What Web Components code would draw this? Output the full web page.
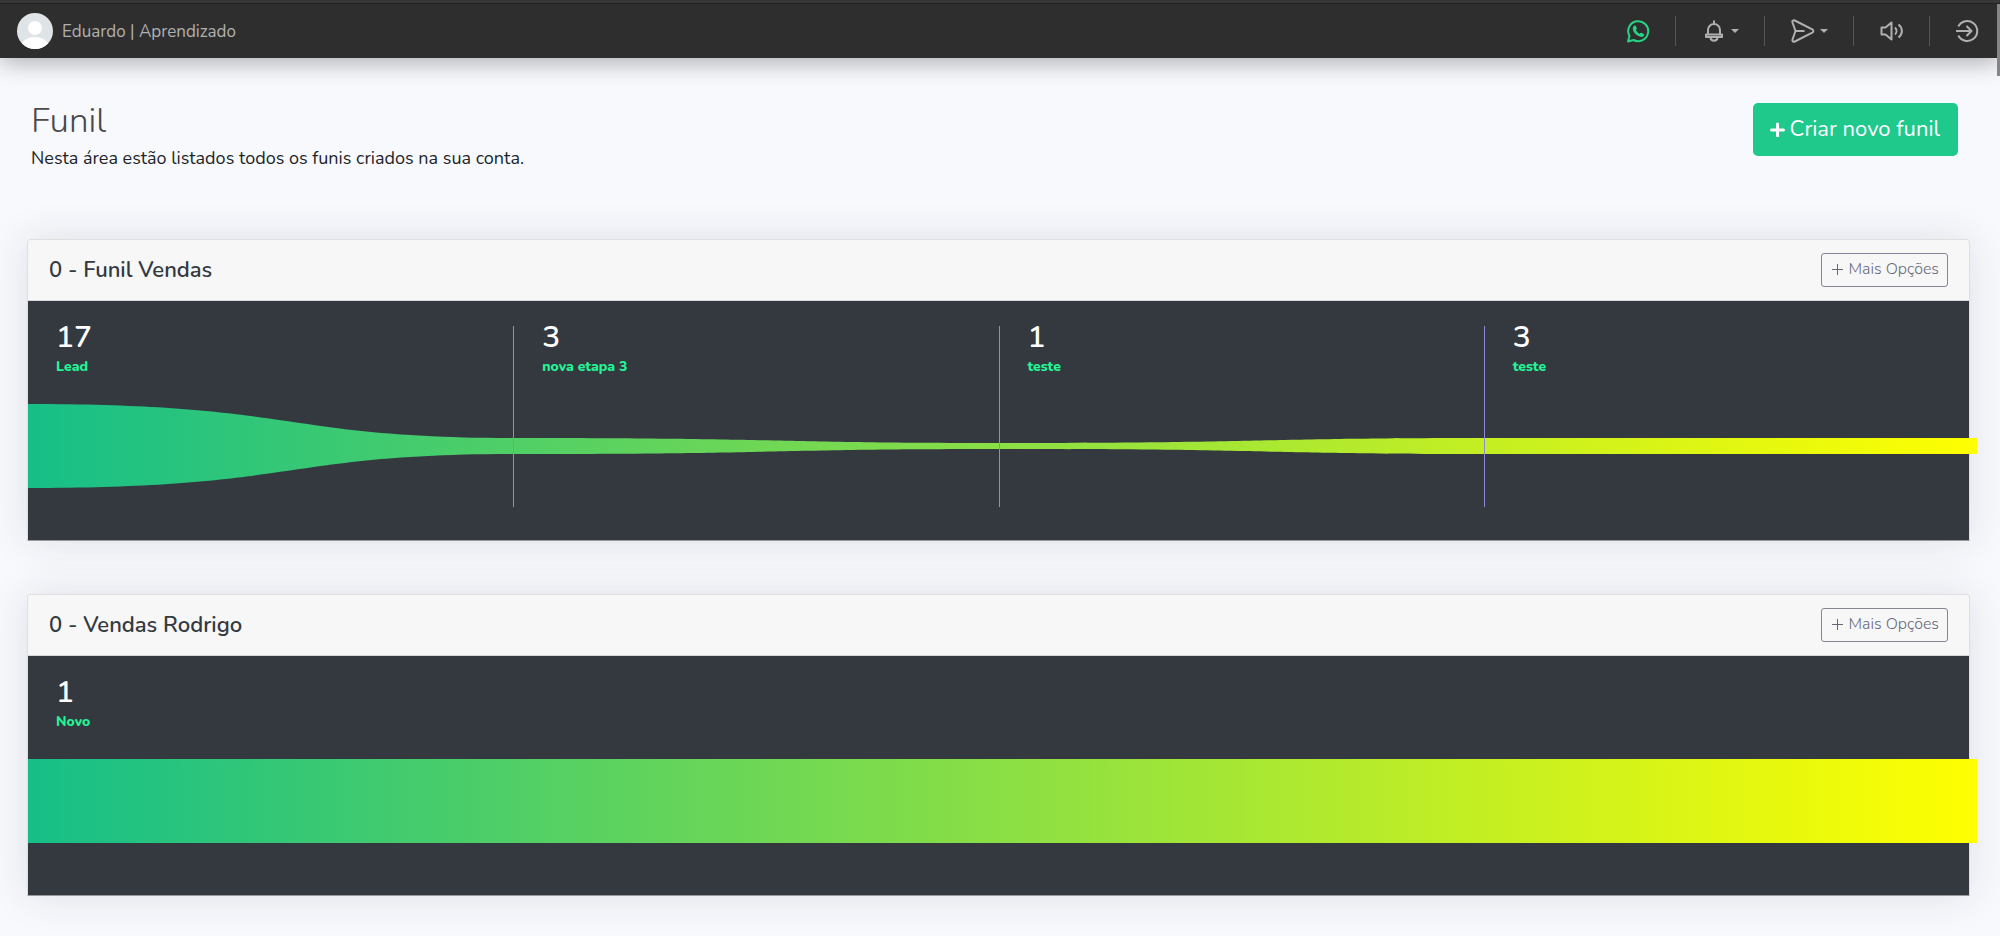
<!DOCTYPE html>
<html lang="pt-BR">
<head>
<meta charset="utf-8">
<title>Funil</title>
<style>
  body {
    margin: 0;
    background: #f8f9fd;
    color: #212529;
    font-family: Nunito, Lato, "Open Sans", sans-serif;
    font-size: 17px;
    overflow-x: hidden;
  }

  main {
    display: flex;
    flex-direction: column;
    gap: 53px;
    padding: 36px 30px 40px 27px;
  }
</style>
</head>
<body>
<app-navbar user="Eduardo | Aprendizado"></app-navbar>

<main>
  <page-header>
    <span slot="title">Funil</span>
    <span slot="text">Nesta área estão listados todos os funis criados na sua conta.</span>
    <span slot="action">Criar novo funil</span>
  </page-header>
  <funnel-card id="vendas">0 - Funil Vendas</funnel-card>
  <funnel-card id="rodrigo">0 - Vendas Rodrigo</funnel-card>
</main>

<script>
const ICONS = {
  whatsapp: `
    <path d="M2 22.5l1.5-5.4A10 10 0 1 1 7.500 21z"/>
    <path fill="currentColor" stroke="none" d="M7.7 6.9c.5-.6 1.7-.7 2-.1l1.1 2.4c.2.4-.1 1-.9 1.7.9 1.9 2.2 3.1 3.9 3.9.6-.9 1.1-1.2 1.6-1l2.4 1.2c.5.3.4 1.3-.1 1.9-1.2 1.4-3.2 1.3-5.7-.1-2.4-1.3-4.1-3.3-4.9-5.6-.5-1.7-.3-3.2.6-4.3z"/>`,
  bell: `
    <path d="M5.5 16c.8-1.3.5-3 .5-5a6 6 0 0 1 12 0c0 2-.3 3.7.5 5"/>
    <path d="M12 4.5v-3M4 15.5h16V18H4zM8.5 19c.5 3.5 6.5 3.5 7 0"/>`,
  send: `
    <path d="M1.5 3.5C1 1.8 2.4.9 3.8 1.5l17.5 8.9c1.4.8 1.4 2.4 0 3.2L3.8 22.5c-1.4.6-2.8-.3-2.3-2l3-8.5z"/>
    <path d="M4.5 12h9"/>`,
  volume: `
    <path d="M1.5 8.5h4l6-5v17l-6-5h-4z"/>
    <path d="M15 8.5c2 2 2 5 0 7M18.5 5.5c4.5 3.5 4.5 9.5 0 13"/>`,
  logout: `
    <path d="M3.3 7.5a10 10 0 1 1 0 9"/>
    <path d="M1 12h15M11.5 7l5 5-5 5"/>`
};

function icon(name) {
  return `<svg class="icon" viewBox="0 0 24 24" fill="none" stroke="currentColor" aria-hidden="true">${ICONS[name]}</svg>`;
}

class AppNavbar extends HTMLElement {
  constructor() {
    super();
    this.attachShadow({ mode: "open" });
  }

  connectedCallback() {
    this.render();
  }

  render() {
    this.shadowRoot.innerHTML = `
    <style>
      :host {
        display: block;
        position: relative;
        background: #2e2e2e;
        border-top: 3px solid #373737;
        color: #b0b0b0;
        box-shadow: 0 4px 24px rgba(0, 0, 0, 0.32);
      }

      nav {
        display: flex;
        align-items: center;
        justify-content: space-between;
        height: 54px;
        border-top: 1px solid #222;
        padding: 0 21px 0 17px;
      }

      .user {
        display: flex;
        align-items: center;
        gap: 9px;
        color: inherit;
        text-decoration: none;
      }

      .avatar {
        width: 36px;
        height: 36px;
      }

      .actions {
        display: flex;
        align-items: center;
      }

      button {
        display: flex;
        align-items: center;
        gap: 5px;
        height: 30px;
        padding: 0 25px 0 26px;
        border: 0;
        border-left: 1px solid #555;
        background: none;
        color: inherit;
        cursor: pointer;
      }

      button:first-child {
        border-left: 0;
        color: #25d383;
      }

      button:last-child {
        padding: 0 0 0 25px;
      }

      .icon {
        width: 24px;
        height: 24px;
        stroke-width: 2;
        stroke-linejoin: round;
      }

      .caret {
        border: 4px solid transparent;
        border-top-color: currentColor;
        border-bottom: 0;
      }

      .thumb {
        position: absolute;
        top: 1px;
        right: 0;
        width: 3px;
        height: 72px;
        background: #858585;
      }
    </style>

    <nav>
      <a class="user" href="#">
        <svg class="avatar" viewBox="0 0 36 36" aria-hidden="true">
          <clipPath id="round"><circle cx="18" cy="18" r="18"/></clipPath>
          <g clip-path="url(#round)">
            <rect width="36" height="36" fill="#dfe4e7"/>
            <circle cx="18" cy="15" r="7" fill="#fff"/>
            <ellipse cx="18" cy="34" rx="14" ry="10" fill="#fff"/>
          </g>
        </svg>
        <span>${this.getAttribute("user") ?? ""}</span>
      </a>
      <div class="actions">
        <button aria-label="WhatsApp">${icon("whatsapp")}</button>
        <button aria-label="Notificações">${icon("bell")}<i class="caret"></i></button>
        <button aria-label="Envios">${icon("send")}<i class="caret"></i></button>
        <button aria-label="Som">${icon("volume")}</button>
        <button aria-label="Sair">${icon("logout")}</button>
      </div>
    </nav>
    <div class="thumb"></div>
  `;
  }
}

class PageHeader extends HTMLElement {
  constructor() {
    super();
    this.attachShadow({ mode: "open" });
    this.shadowRoot.innerHTML = `
    <style>
      :host {
        display: flex;
        justify-content: space-between;
        align-items: flex-start;
        padding: 9px 12px 16px 4px;
      }

      h1 {
        margin: 0;
        color: #4a4a4a;
        font-size: 35px;
        line-height: 36px;
        font-weight: 300;
      }

      p {
        margin: 7px 0 0;
        font-size: 18px;
        line-height: 24px;
      }

      button {
        display: flex;
        align-items: center;
        gap: 5px;
        height: 53px;
        padding: 0 18px 2px 16px;
        border: 0;
        border-radius: 5px;
        background: #1ec98b;
        color: #fff;
        font-family: inherit;
        font-size: 22px;
        cursor: pointer;
      }

      svg {
        width: 16px;
        height: 16px;
      }
    </style>

    <div>
      <h1><slot name="title"></slot></h1>
      <p><slot name="text"></slot></p>
    </div>
    <button>
      <svg viewBox="0 0 16 16" fill="none" stroke="#fff" stroke-width="3" stroke-linecap="round" aria-hidden="true"><path d="M8.5 3v12M2.5 9h12"/></svg>
      <slot name="action"></slot>
    </button>
  `;
  }
}

class FunnelCard extends HTMLElement {
  constructor() {
    super();
    this.attachShadow({ mode: "open" });
  }

  set stages(value) {
    this._stages = value;
    this.render();
  }

  get stages() {
    return this._stages;
  }

  // 100 units per stage; the ribbon eases between the stage sizes
  ribbon() {
    const half = this._stages.map((s) => s.size / 2);
    const mid = 145;
    let top = `M0 ${mid - half[0]}`;
    let bottom = "";
    half.forEach((h, i) => {
      const next = half[i + 1] ?? h;
      const x = i * 100;
      top += ` C${x + 56} ${mid - h} ${x + 52} ${mid - next} ${x + 100} ${mid - next}`;
      bottom = ` C${x + 52} ${mid + next} ${x + 56} ${mid + h} ${x} ${mid + h}` + bottom;
    });
    const last = half[half.length - 1];
    return `${top} V${mid + last}${bottom} Z`;
  }

  render() {
    const s = this._stages;
    if (!s) return;

    this.shadowRoot.innerHTML = `
    <style>
      :host {
        display: block;
        border: 1px solid #dfdfdf;
        border-bottom-color: #999;
        border-radius: 4px 4px 0 0;
        box-shadow: 0 0 40px rgba(40, 42, 60, 0.12);
      }

      header {
        display: flex;
        align-items: center;
        justify-content: space-between;
        height: 60px;
        padding: 0 21px;
        border-bottom: 1px solid #d6d7d8;
        border-radius: 3px 3px 0 0;
        background: #f7f7f7;
      }

      h2 {
        margin: 0;
        color: #343a40;
        font-size: 22px;
        line-height: 30px;
        font-weight: 600;
      }

      button {
        display: flex;
        align-items: center;
        gap: 5px;
        height: 34px;
        padding: 0 8px 2px 9px;
        border: 1px solid #858796;
        border-radius: 3px;
        background: none;
        color: #666877;
        font-family: inherit;
        font-size: 16px;
        font-weight: 300;
        cursor: pointer;
      }

      button svg {
        width: 12px;
        height: 12px;
      }

      .funnel {
        position: relative;
        height: 239px;
        background: #343940;
      }

      .ribbon {
        position: absolute;
        top: 0;
        left: 0;
        width: calc(100% + 8px);
        height: 100%;
      }

      .stages {
        position: relative;
        display: grid;
        grid-auto-flow: column;
        grid-auto-columns: 1fr;
        height: 181px;
        padding-top: 25px;
      }

      .stage {
        padding-left: 28px;
        border-left: 1px solid #9089d4;
      }

      .stage:first-child {
        padding-left: 27px;
        border-left-color: transparent;
      }

      .value {
        color: #fff;
        font-size: 30px;
        line-height: 24px;
        font-weight: 600;
      }

      .label {
        margin-top: 8px;
        color: #23f597;
        font-size: 14px;
        line-height: 18px;
        font-weight: 800;
      }
    </style>

    <header>
      <h2><slot></slot></h2>
      <button>
        <svg viewBox="0 0 12 12" fill="none" stroke="currentColor" aria-hidden="true"><path d="M6.5 1v11M1 6.5h11"/></svg>
        Mais Opções
      </button>
    </header>
    <div class="funnel">
      <svg class="ribbon" viewBox="0 0 ${s.length * 100} 239" preserveAspectRatio="none" aria-hidden="true">
        <linearGradient id="fill"><stop stop-color="#16bf88"/><stop offset="1" stop-color="#ff0"/></linearGradient>
        <path d="${this.ribbon()}" fill="url(#fill)"/>
      </svg>
      <div class="stages">
        ${s.map((e) => `
        <div class="stage">
          <div class="value">${e.total}</div>
          <div class="label">${e.nome}</div>
        </div>`).join("")}
      </div>
    </div>
  `;
  }
}

customElements.define("app-navbar", AppNavbar);
customElements.define("page-header", PageHeader);
customElements.define("funnel-card", FunnelCard);

document.getElementById("vendas").stages = [
  { total: 17, nome: "Lead", size: 84 },
  { total: 3, nome: "nova etapa 3", size: 16 },
  { total: 1, nome: "teste", size: 6 },
  { total: 3, nome: "teste", size: 16 }
];

document.getElementById("rodrigo").stages = [
  { total: 1, nome: "Novo", size: 84 }
];
</script>
</body>
</html>
